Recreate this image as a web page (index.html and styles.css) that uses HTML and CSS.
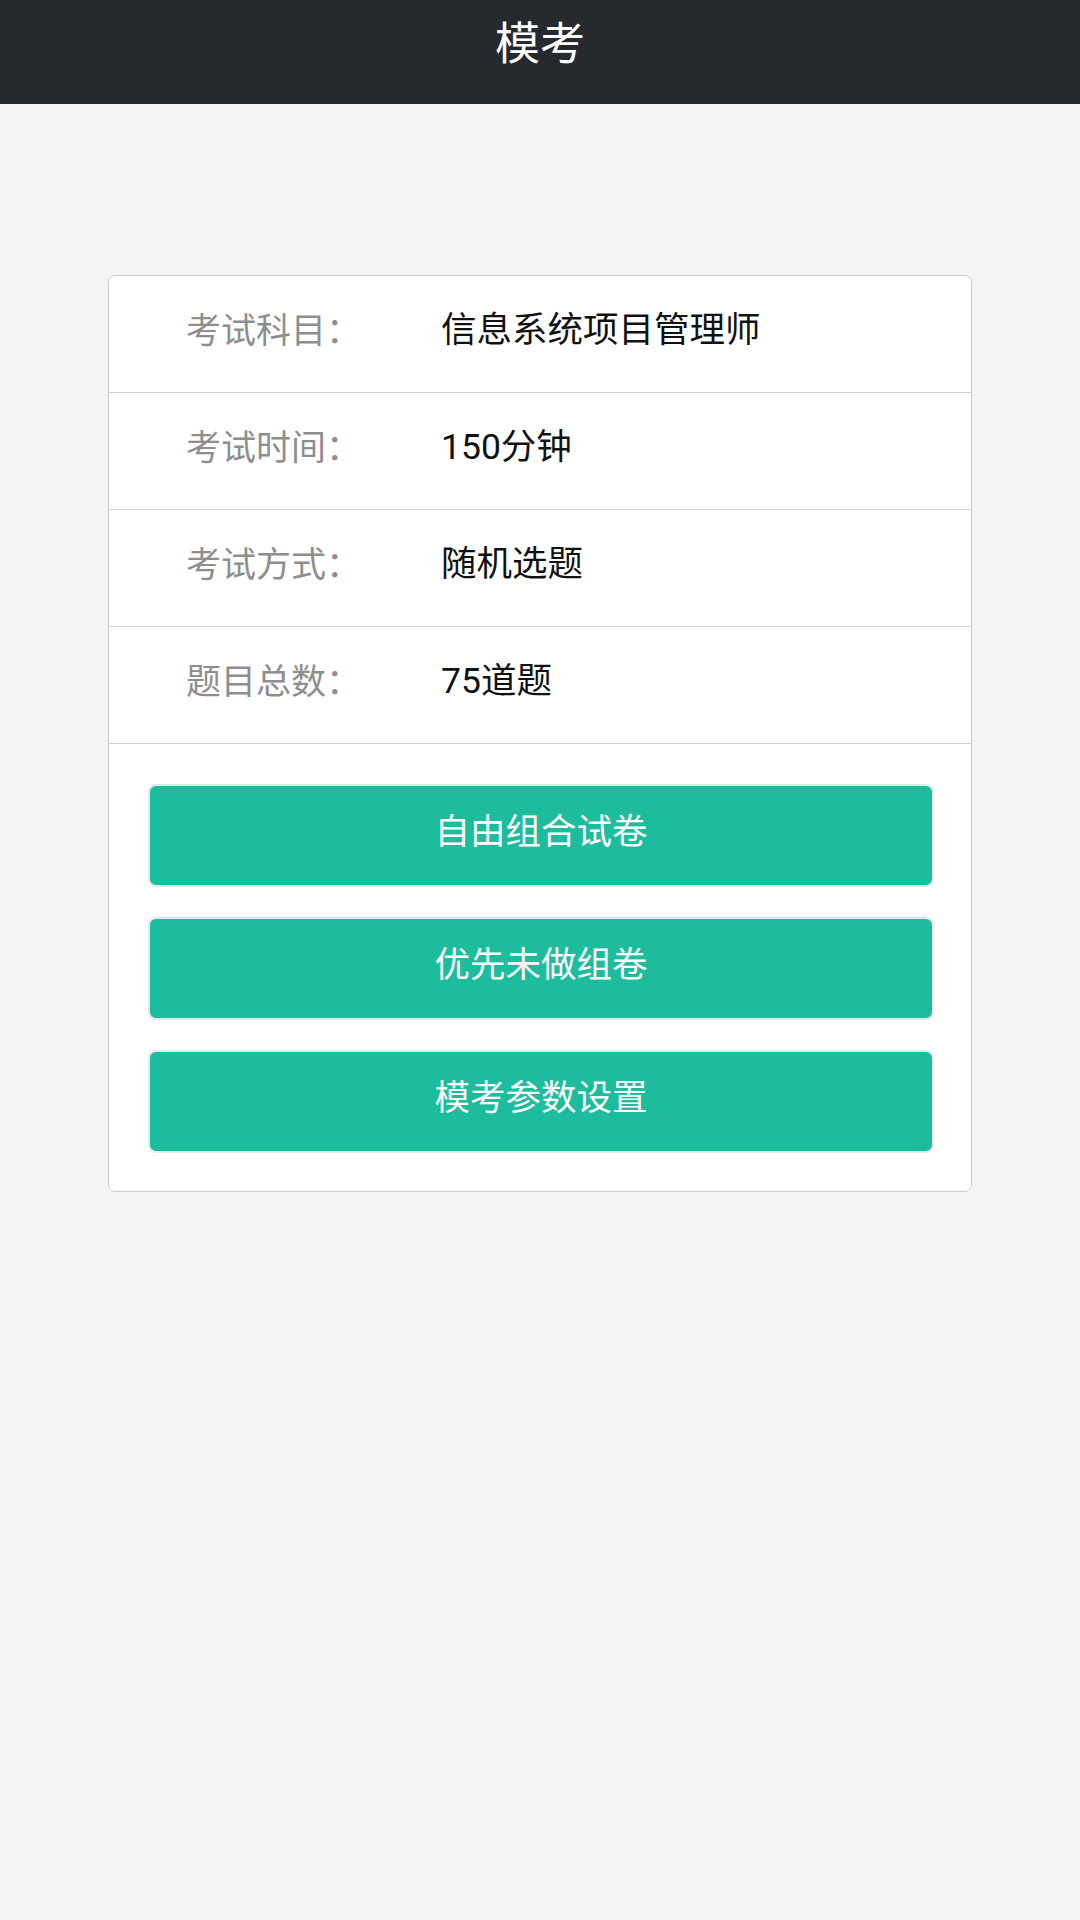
FILE: index.html
```html
<!DOCTYPE html>
<html lang="zh-CN">
<head>
<meta charset="utf-8">
<title>模考</title>
<link rel="stylesheet" href="styles.css">
</head>
<body>
<header class="topbar"><h1 class="title">模考</h1></header>
<main class="page">
  <section class="card">
    <div class="row"><span class="label">考试科目：</span><span class="value">信息系统项目管理师</span></div>
    <div class="row"><span class="label">考试时间：</span><span class="value">150分钟</span></div>
    <div class="row"><span class="label">考试方式：</span><span class="value">随机选题</span></div>
    <div class="row"><span class="label">题目总数：</span><span class="value">75道题</span></div>
    <div class="actions">
      <button class="btn">自由组合试卷</button>
      <button class="btn">优先未做组卷</button>
      <button class="btn">模考参数设置</button>
    </div>
  </section>
</main>
</body>
</html>
```
FILE: styles.css
```css
* { box-sizing: border-box; }
html, body { margin: 0; padding: 0; }
body {
  background: #f4f4f4;
  font-family: Roboto, "Noto Sans CJK SC", "Noto Sans", sans-serif;
  width: 1080px;
  min-height: 1920px;
}
.topbar {
  height: 104px;
  background: #26292e;
  display: flex;
  justify-content: center;
}
.title {
  margin: 0;
  color: #ffffff;
  font-size: 45px;
  font-weight: 400;
  line-height: 90px;
}
.page {
  padding-top: 171px;
  display: flex;
  justify-content: center;
}
.card {
  width: 864px;
  background: #ffffff;
  border: 1px solid #cfcfd2;
  border-radius: 7px;
  display: flex;
  flex-direction: column;
}
.row {
  height: 117px;
  border-bottom: 1px solid #d2d2d2;
  display: flex;
  align-items: center;
  padding-left: 77px;
  padding-bottom: 6px;
  line-height: 1;
}
.label {
  width: 255px;
  color: #8e8e8e;
  font-size: 35px;
}
.value {
  color: #111111;
  font-size: 35.5px;
}
.actions {
  padding: 40px 37px 38px 39px;
  display: flex;
  flex-direction: column;
  gap: 30px;
}
.btn {
  height: 103px;
  width: 100%;
  background: #1cbc9c;
  border: 2px solid #e3ebe9;
  border-radius: 8px;
  color: #ffffff;
  font-family: Roboto, "Noto Sans CJK SC", "Noto Sans", sans-serif;
  font-size: 35.5px;
  line-height: 1;
  padding: 0 0 5px 0;
}
```
